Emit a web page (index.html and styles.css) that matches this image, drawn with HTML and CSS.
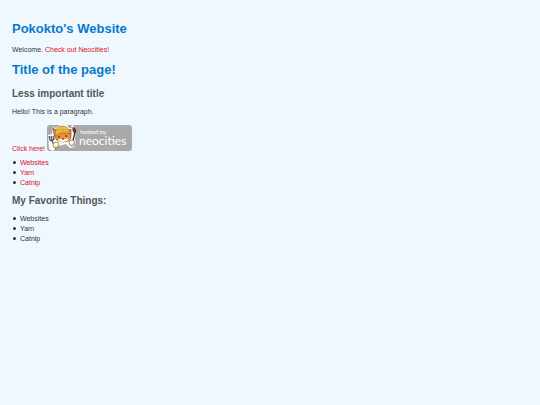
FILE: index.html
```html
<!DOCTYPE html>
<html lang="en">
<head>
	<meta charset="UTF-8">
	<meta name="viewport" content="width=device-width, initial-scale=1">
	<title>Pokokto's Website</title>
	<link rel="stylesheet" href="styles.css">
</head>
<body>
	<h1>Pokokto's Website</h1>
	<p>Welcome. <a href="#neocities">Check out Neocities!</a></p>

	<h1>Title of the page!</h1>
	<h2>Less important title</h2>
	<p>Hello! This is a paragraph.</p>

	<p class="hosted">
		<a href="#click">Click here!</a>
		<a href="#neocities" aria-label="Hosted by Neocities"><svg class="badge" viewBox="0 0 85 26">
			<rect width="85" height="26" rx="3" fill="#a9a9a9"/>
			<!-- white outline behind the cat -->
			<path d="M1 10l4-1 1-7 3 1 4-3h7l2 3h3l-1-2 2-1 3 5-1 9 1 4-2 4-4 1-4-4-7 2-4 3-2 2-4-2z" fill="#fff"/>
			<!-- fork -->
			<path d="M2 11l1 4 2 1 4 8M6 11l1 3-2 2M4 11l1 4" fill="none" stroke="#4b5159" stroke-width="1.2"/>
			<!-- brush -->
			<path d="M28 7l-3 13" stroke="#4d2924" stroke-width="1.3"/>
			<path d="M26 2q3 1 3 5l-2 1q-2-3-1-6z" fill="#8e2926" stroke="#38201f" stroke-width=".6"/>
			<!-- head -->
			<path d="M7 9l-1-6 5 3h9l4-2v7q0 6-8 6t-9-8z" fill="#ed8b38" stroke="#6b3a1c" stroke-width=".6"/>
			<path d="M11 15q2-2 5-1 3-1 6 0-2 3-6 3-4 0-5-2z" fill="#fff4e4"/>
			<path d="M8 9q0-6 6-8 7 0 8 5l1 3q-7-3-14 2z" fill="#f2c040" stroke="#80601d" stroke-width=".6"/>
			<path d="M10 6q5-3 10-1M9 9q6-4 12-2" fill="none" stroke="#b98528" stroke-width=".6"/>
			<path d="M12 11v2M19 10v2M15 14h2" stroke="#2d211e" stroke-width=".9" fill="none"/>
			<!-- paws -->
			<circle cx="9" cy="20" r="3" fill="#fff6e6" stroke="#6b4a2c" stroke-width=".6"/>
			<circle cx="25" cy="18" r="3" fill="#fff6e6" stroke="#6b4a2c" stroke-width=".6"/>
			<path d="M8 22q3 1 3-2M24 20q3 0 3-3" fill="none" stroke="#e7a348" stroke-width=".8"/>
			<text class="badge-small" x="33" y="9">hosted by,</text>
			<text class="badge-name" x="32" y="20">neocities</text>
		</svg></a>
	</p>

	<ul>
		<li><a href="#websites">Websites</a></li>
		<li><a href="#yarn">Yarn</a></li>
		<li><a href="#catnip">Catnip</a></li>
	</ul>

	<h2>My Favorite Things:</h2>
	<ul>
		<li>Websites</li>
		<li>Yarn</li>
		<li>Catnip</li>
	</ul>
</body>
</html>
```

FILE: styles.css
```css
body {
	margin: 0;
	padding: 21px 12px;
	background: #f0f8ff;
	color: #333;
	font: 7px/10px "Liberation Sans", Arial, sans-serif;
}
h1 {
	margin: 0 0 8px;
	color: #0779cb;
	font-size: 13px;
	line-height: 16px;
}
h2 {
	margin: 0 0 7px;
	color: #555;
	font-size: 10px;
	line-height: 12px;
}
h1 + h2 {
	margin-top: 10px;
}
p {
	margin: 0 0 7px;
}
a {
	color: #d8101c;
	text-decoration: none;
}
ul {
	margin: 0 0 7px;
	padding: 0;
	list-style: none;
}
li::before {
	content: "";
	display: inline-block;
	width: 3px;
	height: 3px;
	margin: 0 4px 0 1px;
	border-radius: 50%;
	background: #333;
	vertical-align: 1px;
}
.hosted {
	margin: 8px 0 4px;
}
.badge {
	width: 85px;
	height: 26px;
}
.badge text {
	fill: #fff;
	font-family: Lato, "Open Sans", sans-serif;
}
.badge .badge-small {
	font-size: 6px;
}
.badge .badge-name {
	font-size: 12px;
}
```
